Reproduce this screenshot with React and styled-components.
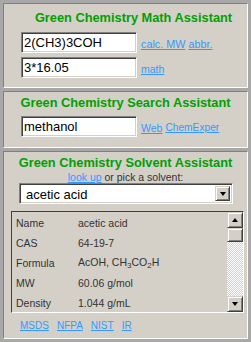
import React from "react";
import styled, { createGlobalStyle } from "styled-components";

// page level: gray desk colour, no body margin
const GlobalStyle = createGlobalStyle`
  html, body {
    margin: 0;
    padding: 0;
    background: #a8a8a8;
  }
  body {
    font-family: "Liberation Sans", Arial, sans-serif;
  }
`;

const Page = styled.div`
  width: 251px;
  height: 342px;
  box-sizing: border-box;
  padding: 3px;
  display: flex;
  flex-direction: column;
  gap: 3px;
`;

const Panel = styled.section`
  box-sizing: border-box;
  height: ${(p) => p.$h}px;
  flex-shrink: 0;
  background: #d4d0c8;
  border: 1px solid;
  border-color: #808080 #ffffff #ffffff #808080;
  padding-top: ${(p) => p.$top}px;
  display: flex;
  flex-direction: column;
  overflow: hidden;
`;

const Title = styled.h2`
  margin: 0;
  padding-left: ${(p) => p.$shift || 0}px;
  height: 16px;
  line-height: 16px;
  font-size: 12.8px;
  font-weight: bold;
  color: #00a000;
  text-align: center;
  white-space: nowrap;
`;

const Row = styled.div`
  display: flex;
  align-items: center;
  gap: 4px;
  margin: ${(p) => p.$mt}px 0 0 17px;
`;

const TextBox = styled.input`
  box-sizing: border-box;
  width: 116px;
  height: 21px;
  margin: 0;
  padding: 0 2px;
  background: #ffffff;
  border: 1px solid;
  border-color: #808080 #ffffff #ffffff #808080;
  box-shadow: inset 1px 1px #404040, inset -1px -1px #d4d0c8;
  font-family: "Liberation Sans", Arial, sans-serif;
  font-size: 13px;
  color: #000;
  outline: none;
`;

const Links = styled.div`
  display: flex;
  gap: ${(p) => p.$gap || 3}px;
  padding-top: 2px;
`;

const Link = styled.a`
  font-size: ${(p) => p.$size || 10.5}px;
  color: #3399ff;
  text-decoration: underline;
  white-space: nowrap;
  cursor: pointer;
`;

const Hint = styled.div`
  height: 12px;
  line-height: 12px;
  font-size: 10.5px;
  color: #333;
  text-align: center;
  white-space: nowrap;
`;

const SolventSelect = styled.div`
  box-sizing: border-box;
  width: 214px;
  height: 21px;
  margin-left: 15px;
  display: flex;
  align-items: stretch;
  background: #ffffff;
  border: 1px solid;
  border-color: #808080 #ffffff #ffffff #808080;
  box-shadow: inset 1px 1px #404040, inset -1px -1px #d4d0c8;
  padding: 2px;
`;

const SelectText = styled.span`
  flex: 1;
  padding-left: 4px;
  font-size: 13px;
  line-height: 17px;
  color: #000;
`;

const BevelButton = styled.div`
  box-sizing: border-box;
  width: ${(p) => p.$w || 16}px;
  height: ${(p) => p.$h || 16}px;
  flex-shrink: 0;
  background: #d4d0c8;
  border: 1px solid;
  border-color: #d4d0c8 #404040 #404040 #d4d0c8;
  box-shadow: inset 1px 1px #ffffff, inset -1px -1px #808080;
  display: flex;
  align-items: center;
  justify-content: center;
`;

const Arrow = styled.span`
  width: 0;
  height: 0;
  border-left: 3.5px solid transparent;
  border-right: 3.5px solid transparent;
  ${(p) =>
    p.$up
      ? "border-bottom: 4px solid #000;"
      : "border-top: 4px solid #000;"}
`;

const InfoBox = styled.div`
  box-sizing: border-box;
  width: 233px;
  height: 102px;
  margin: 7px 0 0 7px;
  display: flex;
  border: 1px solid;
  border-color: #404040 #ffffff #ffffff #404040;
  overflow: hidden;
`;

const InfoTable = styled.table`
  flex: 1;
  align-self: flex-start;
  border-collapse: collapse;
  margin-top: 1px;
  & td {
    height: 20px;
    padding: 0;
    font-size: 10.5px;
    color: #333;
    white-space: nowrap;
    vertical-align: middle;
  }
  & td:first-child {
    width: 62px;
    padding-left: 4px;
  }
  & sub {
    font-size: 8px;
    vertical-align: -2px;
  }
`;

const ScrollBar = styled.div`
  width: 16px;
  display: flex;
  flex-direction: column;
`;

const Track = styled.div`
  flex: 1;
  background: repeating-conic-gradient(#ffffff 0 25%, #d4d0c8 0 50%) 0 0 / 2px 2px;
`;

const BottomLinks = styled(Links)`
  margin: 4px 0 0 16px;
  height: 13px;
  align-items: center;
`;

const solventRows = [
  ["Name", "acetic acid"],
  ["CAS", "64-19-7"],
  [
    "Formula",
    <>
      AcOH, CH<sub>3</sub>CO<sub>2</sub>H
    </>,
  ],
  ["MW", "60.06 g/mol"],
  ["Density", "1.044 g/mL"],
];

const App = () => {
  return (
    <React.Fragment>
      <GlobalStyle />
      <Page>
        <Panel $h={85} $top={6}>
          <Title $shift={16}>Green Chemistry Math Assistant</Title>
          <Row $mt={6}>
            <TextBox defaultValue="2(CH3)3COH" />
            <Links>
              <Link $size={10.8}>calc. MW</Link>
              <Link $size={10.8}>abbr.</Link>
            </Links>
          </Row>
          <Row $mt={4}>
            <TextBox defaultValue="3*16.05" />
            <Links>
              <Link>math</Link>
            </Links>
          </Row>
        </Panel>

        <Panel $h={57} $top={3}>
          <Title>Green Chemistry Search Assistant</Title>
          <Row $mt={5}>
            <TextBox defaultValue="methanol" />
            <Links>
              <Link>Web</Link>
              <Link $size={10.2}>ChemExper</Link>
            </Links>
          </Row>
        </Panel>

        <Panel $h={188} $top={3}>
          <Title>Green Chemistry Solvent Assistant</Title>
          <Hint>
            <Link>look up</Link> or pick a solvent:
          </Hint>
          <SolventSelect>
            <SelectText>acetic acid</SelectText>
            <BevelButton $w={15} $h={15}>
              <Arrow />
            </BevelButton>
          </SolventSelect>
          <InfoBox>
            <InfoTable>
              <tbody>
                {solventRows.map((row, index) => (
                  <tr key={index}>
                    <td>{row[0]}</td>
                    <td>{row[1]}</td>
                  </tr>
                ))}
              </tbody>
            </InfoTable>
            <ScrollBar>
              <BevelButton>
                <Arrow $up />
              </BevelButton>
              <BevelButton $h={14} />
              <Track />
              <BevelButton>
                <Arrow />
              </BevelButton>
            </ScrollBar>
          </InfoBox>
          <BottomLinks $gap={8}>
            <Link $size={10}>MSDS</Link>
            <Link $size={10}>NFPA</Link>
            <Link $size={10}>NIST</Link>
            <Link $size={10}>IR</Link>
          </BottomLinks>
        </Panel>
      </Page>
    </React.Fragment>
  );
};

export default App;
